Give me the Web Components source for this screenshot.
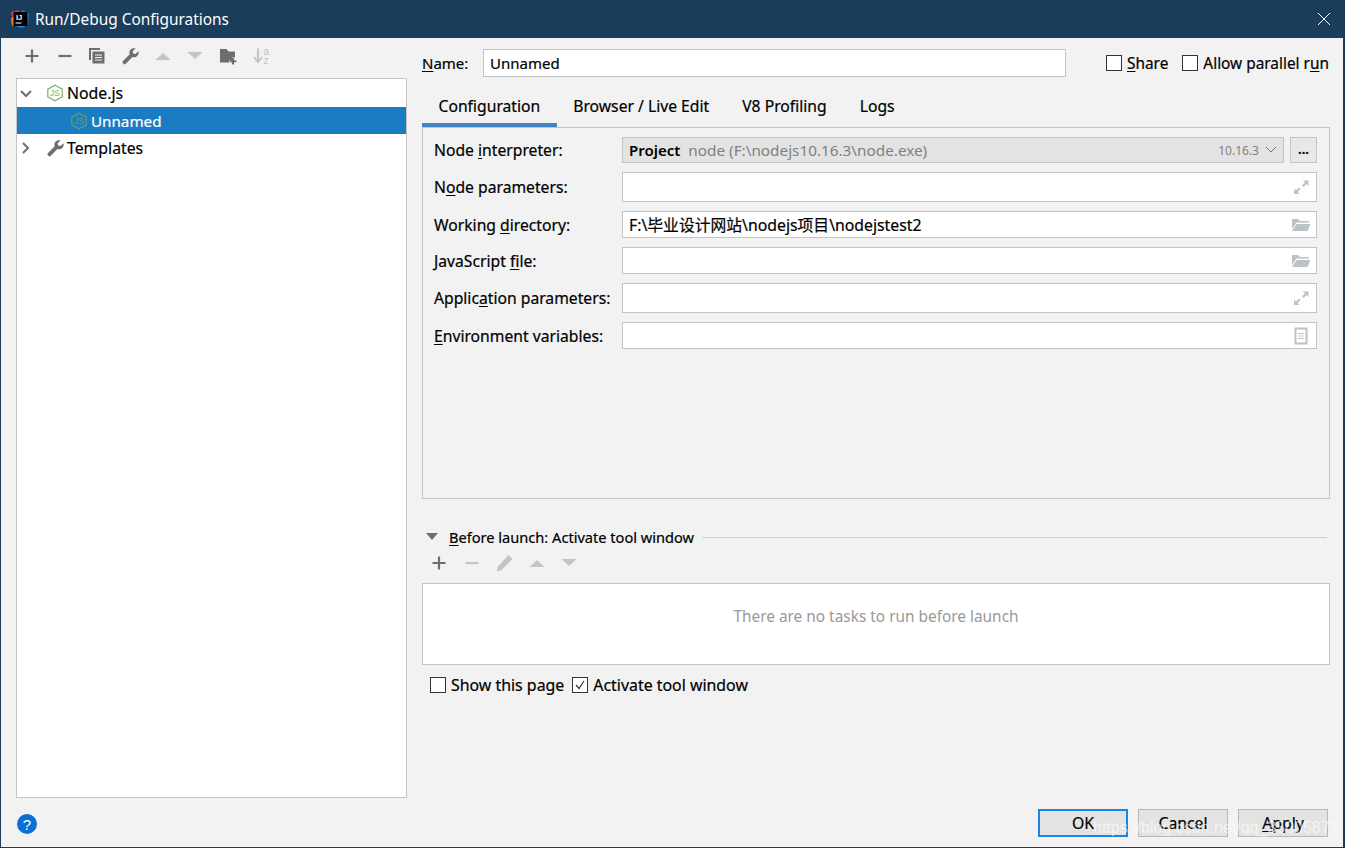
<!DOCTYPE html>
<html lang="en">
<head>
<meta charset="utf-8">
<title>Run/Debug Configurations</title>
<style>
  html, body { margin: 0; padding: 0; background: #f2f2f2; }
  body { font: 15px "Noto Sans", "Noto Sans CJK SC", sans-serif; color: #000; -webkit-text-stroke: 0.2px; }
  u { text-underline-offset: 2px; text-decoration-thickness: 1px; }
</style>
</head>
<body>
<rd-dialog>
  <rd-titlebar slot="title">Run/Debug Configurations</rd-titlebar>

  <div slot="left">
    <rd-toolbar pitch="32.7" first="8" top="10">
      <rd-icon name="plus"></rd-icon>
      <rd-icon name="minus"></rd-icon>
      <rd-icon name="copy"></rd-icon>
      <rd-icon name="wrench"></rd-icon>
      <rd-icon name="up"></rd-icon>
      <rd-icon name="down"></rd-icon>
      <rd-icon name="folderplus"></rd-icon>
      <rd-icon name="sort"></rd-icon>
    </rd-toolbar>
  </div>
  <rd-tree slot="left">
    <rd-tree-row arrow="open" icon="node" style="font-size:15.8px">Node.js</rd-tree-row>
    <rd-tree-row depth="1" icon="nodesel" selected style="font-size:15.2px">Unnamed</rd-tree-row>
    <rd-tree-row arrow="closed" icon="wrench" style="font-size:15.8px">Templates</rd-tree-row>
  </rd-tree>

  <rd-namebar slot="right">
    <span slot="label"><u>N</u>ame:</span>
    <span slot="value">Unnamed</span>
    <rd-check slot="opts" style="font-size:15.4px"><u>S</u>hare</rd-check>
    <rd-check slot="opts" style="font-size:15.4px">Allow parallel r<u>u</u>n</rd-check>
  </rd-namebar>

  <rd-tabs slot="right" style="font-size:15.7px">
    <span active>Configuration</span>
    <span>Browser / Live Edit</span>
    <span>V8 Profiling</span>
    <span>Logs</span>
  </rd-tabs>

  <rd-panel slot="right" style="font-size:15.7px">
    <rd-field combo h="26"><span slot="label">Node <u>i</u>nterpreter:</span><b slot="value">Project</b><span slot="hint">node (F:\nodejs10.16.3\node.exe)</span><span slot="ver">10.16.3</span></rd-field>
    <rd-field icon="expand" h="30"><span slot="label">N<u>o</u>de parameters:</span></rd-field>
    <rd-field icon="folder" h="27"><span slot="label">Working <u>d</u>irectory:</span><span slot="value" style="font-size:15.8px">F:\毕业设计网站\nodejs项目\nodejstest2</span></rd-field>
    <rd-field icon="folder" h="27"><span slot="label">JavaScript <u>f</u>ile:</span></rd-field>
    <rd-field icon="expand" h="30"><span slot="label">Applic<u>a</u>tion parameters:</span></rd-field>
    <rd-field icon="doc" h="27"><span slot="label"><u>E</u>nvironment variables:</span></rd-field>
  </rd-panel>

  <rd-before slot="right" style="font-size:14.6px"><u>B</u>efore launch: Activate tool window</rd-before>

  <rd-toolbar slot="right" pitch="32.5" first="9" top="8" h="36">
    <rd-icon name="plus"></rd-icon>
    <rd-icon name="minusoff"></rd-icon>
    <rd-icon name="pencil"></rd-icon>
    <rd-icon name="up"></rd-icon>
    <rd-icon name="down"></rd-icon>
  </rd-toolbar>

  <rd-tasks slot="right" style="font-size:15.4px">There are no tasks to run before launch</rd-tasks>

  <rd-checks slot="right" style="font-size:15.9px">
    <rd-check>Show this page</rd-check>
    <rd-check checked>Activate tool window</rd-check>
  </rd-checks>

  <rd-help slot="help"></rd-help>
  <rd-button slot="buttons" default>OK</rd-button>
  <rd-button slot="buttons">Cancel</rd-button>
  <rd-button slot="buttons"><u>A</u>pply</rd-button>
</rd-dialog>

<script>
const ICONS = {
  plus: '<path d="M8 1.500v13M1.500 8h13" stroke="#6e6e6e" stroke-width="2.200" fill="none"/>',
  minus: '<path d="M1.500 8h13" stroke="#6e6e6e" stroke-width="2.200" fill="none"/>',
  minusoff: '<path d="M1.500 8h13" stroke="#c4c4c4" stroke-width="2.200" fill="none"/>',
  copy: '<path d="M0 0h11v2H2v10H0z" fill="#6e6e6e"/><path d="M3.500 3.500h12v12h-12z" fill="#6e6e6e"/><path d="M6 6.500h7v1H6zM6 9h7v1H6zM6 11.500h7v1H6z" fill="#f2f2f2"/>',
  wrench: '<path d="M16.400 3.200l-2.900 2.900-2.300-.5-.5-2.300L13.600.4C11.900-.2 10 .2 8.700 1.500 7.400 2.800 7.100 4.700 7.700 6.300L.8 13.200c-.5.5-.5 1.300 0 1.800l.9.900c.5.500 1.300.500 1.800 0l6.900-6.900c1.600.6 3.500.3 4.800-1 1.300-1.300 1.800-3.100 1.200-4.800z" fill="#6e6e6e"/>',
  up: '<path d="M.5 12L8 5l7.500 7z" fill="#c4c4c4"/>',
  down: '<path d="M.5 4h15L8 11z" fill="#c4c4c4"/>',
  folderplus: '<path d="M0 1h6.500l2 2.500h6.500v6h-3v3H9v2H0z" fill="#6e6e6e"/><path d="M13 10v6.500M9.800 13.200h6.500" stroke="#6e6e6e" stroke-width="2" fill="none"/>',
  sort: '<path d="M5 .5v12.500M1 9l4 5 4-5" stroke="#c4c4c4" stroke-width="2" fill="none"/><text x="10.500" y="7" font-size="10" font-family="Liberation Sans" fill="#c4c4c4">a</text><text x="10.500" y="16" font-size="10" font-family="Liberation Sans" fill="#c4c4c4">z</text>',
  pencil: '<path d="M12.500 0l4 4L5.500 15l-4.500 1.500 1-5z" fill="#c4c4c4"/>',
  node: '<path d="M8 .2l7.200 4v7.600L8 15.800.8 11.800V4.200z" fill="none" stroke="#7fb36c" stroke-width="1.200"/><text x="8" y="11.200" text-anchor="middle" font-size="8.500" font-family="Liberation Sans" fill="#7fb36c" style="-webkit-text-stroke:0">JS</text>',
  nodesel: '<path d="M8 .2l7.200 4v7.600L8 15.800.8 11.800V4.200z" fill="none" stroke="#5f9f6a" stroke-width="1.200"/><text x="8" y="11.200" text-anchor="middle" font-size="8.500" font-family="Liberation Sans" fill="#5f9f6a" style="-webkit-text-stroke:0">JS</text>',
  expand: '<path d="M10 1.500h5.500V7l-1.900-1.900-3 3-1.700-1.700 3-3z" fill="#bcc3c7"/><path d="M1 9.500l1.900 1.900 3-3 1.700 1.700-3 3 1.900 1.900H1z" fill="#bcc3c7"/>',
  folder: '<path d="M-1 2h6l2 2h9v1.500H3.500L-1 12z" fill="#bcc3c7"/><path d="M3.500 7h14l-3 7H-1z" fill="#bcc3c7"/>',
  doc: '<path d="M2.500 .5h11v15h-11z" fill="#fff" stroke="#bcc3c7" stroke-width="2"/><path d="M5 5h6v1H5zM5 7.500h6v1H5zM5 10h6v1H5z" fill="#bcc3c7"/>'
};

function iconSvg(name, size = 16) {
  return `<svg width="${size}" height="${size}" viewBox="0 0 16 16" style="display:block;overflow:visible">${ICONS[name] || ''}</svg>`;
}

class Base extends HTMLElement {
  connectedCallback() {
    if (this.shadowRoot) return;
    this.attachShadow({ mode: 'open' });
    this.shadowRoot.innerHTML = this.render();
  }
}

class RdDialog extends Base {
  render() {
    return `<style>
      :host { display: flex; flex-direction: column; box-sizing: border-box; width: 1345px; height: 848px;
        position: relative; overflow: hidden; background: #f2f2f2;
        border: solid #1a3d5c; border-width: 0 2px 1px 1px; }
      .main { display: grid; grid-template-columns: 391px 908px; column-gap: 15px; padding-left: 15px; height: 760px; }
      .col { display: flex; flex-direction: column; min-height: 0; }
      .foot { display: flex; justify-content: space-between; align-items: flex-start; padding: 11px 15px 0 15px; flex: 1; font-size: 15.8px; }
      .btns { display: flex; gap: 10px; }
      .wm { position: absolute; left: 1092px; top: 819px; font: 16px "Liberation Sans", sans-serif;
        color: rgba(255,255,255,.62); white-space: nowrap; -webkit-text-stroke: 0; }
    </style>
    <slot name="title"></slot>
    <div class="main">
      <div class="col"><slot name="left"></slot></div>
      <div class="col"><slot name="right"></slot></div>
    </div>
    <div class="foot"><slot name="help"></slot><div class="btns"><slot name="buttons"></slot></div></div>
    <div class="wm">https://blog.csdn.net/qq_35005871</div>`;
  }
}

class RdTitlebar extends Base {
  render() {
    return `<style>
      :host { display: flex; align-items: center; height: 38px; margin: 0 -2px 0 -1px; padding-left: 10px; background: #1a3d5c;
        color: #fff; font-size: 15.4px; flex: none; -webkit-text-stroke: 0; }
      svg.logo { margin-right: 5px; flex: none; }
      .x { margin-left: auto; margin-right: 14px; }
    </style>
    <svg class="logo" width="20" height="20" viewBox="0 0 20 20">
      <path d="M1 3l8-2 2 6-8 6z" fill="#f0266e"/>
      <path d="M1 9l4-2 1 8-4 2z" fill="#f58220"/>
      <path d="M12 1l7 3-1 12-6 3-7-2z" fill="#1c7fe0"/>
      <rect x="3.500" y="3" width="14" height="14" fill="#000"/>
      <text x="6" y="10.500" font-size="7.500" font-family="Liberation Sans" font-weight="700" fill="#fff">IJ</text>
      <rect x="5.500" y="13.500" width="6" height="1" fill="#fff"/>
    </svg>
    <slot></slot>
    <svg class="x" width="14" height="14" viewBox="0 0 14 14"><path d="M1 1l12 12M13 1L1 13" stroke="#fff" stroke-width="1"/></svg>`;
  }
}

class RdIcon extends Base {
  render() {
    return `<style>:host { display: block; width: 16px; height: 16px; }</style>${iconSvg(this.getAttribute('name'))}`;
  }
}

class RdToolbar extends Base {
  render() {
    const gap = parseFloat(this.getAttribute('pitch')) - 16;
    const first = this.getAttribute('first');
    const top = this.getAttribute('top');
    const h = this.getAttribute('h') || 40;
    return `<style>
      :host { display: flex; align-items: flex-start; box-sizing: border-box; flex: none; height: ${h}px;
        padding: ${top || 0}px 0 0 ${first}px; gap: ${gap}px; }
      ::slotted(rd-icon) { flex: none; }
    </style><slot></slot>`;
  }
}

class RdTree extends Base {
  render() {
    return `<style>
      :host { display: block; box-sizing: border-box; flex: 1; min-height: 0; background: #fff;
        border: 1px solid #c4c4c4; }
    </style><slot></slot>`;
  }
}

class RdTreeRow extends Base {
  render() {
    const depth = +(this.getAttribute('depth') || 0);
    const arrow = this.getAttribute('arrow');
    const sel = this.hasAttribute('selected');
    const arrows = {
      open: '<path d="M2 5l5 5 5-5" fill="none" stroke="#6e6e6e" stroke-width="2"/>',
      closed: '<path d="M4 2l5 5-5 5" fill="none" stroke="#6e6e6e" stroke-width="2"/>'
    };
    return `<style>
      :host { display: flex; align-items: center; height: ${sel ? 27 : 28}px; padding-left: ${depth ? 54 : 1}px;
        ${sel ? 'background:#1a7dc4;color:#fff;' : ''} }
      .arrow { width: 14px; margin-left: 1px; margin-right: 14px; flex: none; }
      .ic { margin-right: 4px; flex: none; }
    </style>
    ${depth ? '' : `<svg class="arrow" width="14" height="14" viewBox="0 0 14 14">${arrows[arrow] || ''}</svg>`}
    <span class="ic">${iconSvg(this.getAttribute('icon'), 16)}</span><slot></slot>`;
  }
}

class RdCheck extends Base {
  render() {
    const mark = this.hasAttribute('checked')
      ? '<svg width="14" height="14" viewBox="0 0 14 14" style="display:block"><path d="M3 7l3 3.500 5-7.500" fill="none" stroke="#333" stroke-width="1.200"/></svg>' : '';
    return `<style>
      :host { display: inline-flex; align-items: center; gap: 5px; white-space: nowrap; }
      .box { box-sizing: border-box; width: 16px; height: 16px; border: 1px solid #333; background: #fff; flex: none; }
    </style><span class="box">${mark}</span><span><slot></slot></span>`;
  }
}

class RdNamebar extends Base {
  render() {
    return `<style>
      :host { display: flex; align-items: center; height: 28px; margin-top: 11px; flex: none; }
      .label { width: 61px; flex: none; }
      .input { box-sizing: border-box; width: 583px; height: 28px; background: #fff; border: 1px solid #c4c4c4;
        display: flex; align-items: center; padding-left: 6px; flex: none; }
      .opts { display: flex; gap: 14px; margin-left: 40px; }
    </style>
    <span class="label"><slot name="label"></slot></span>
    <span class="input"><slot name="value"></slot></span>
    <span class="opts"><slot name="opts"></slot></span>`;
  }
}

class RdTabs extends Base {
  render() {
    return `<style>
      :host { display: flex; height: 37px; margin-top: 13px; flex: none; box-sizing: border-box; }
      ::slotted(span) { display: flex; align-items: center; padding: 0 16.5px 6px; box-sizing: border-box; height: 37px; }
      ::slotted(span[active]) { border-bottom: 4px solid #4083c9; padding-bottom: 2px; }
    </style><slot></slot>`;
  }
}

class RdPanel extends Base {
  render() {
    return `<style>
      :host { display: grid; grid-auto-rows: min-content; row-gap: 9px; box-sizing: border-box; flex: none;
        height: 372px; padding: 9px 12px 0 11px; border: 1px solid #c4c4c4; }
    </style><slot></slot>`;
  }
}

class RdField extends Base {
  render() {
    const h = this.getAttribute('h');
    const combo = this.hasAttribute('combo');
    const icon = this.getAttribute('icon');
    return `<style>
      :host { display: flex; align-items: center; height: ${h}px; }
      .label { width: 188px; flex: none; }
      .box { box-sizing: border-box; flex: 1; height: 100%; display: flex; align-items: center; padding: 0 6px;
        border: 1px solid #c4c4c4; background: ${combo ? '#e3e3e3' : '#fff'}; min-width: 0; }
      .ic { margin-left: auto; margin-right: 1px; }
      .hint { color: #808080; margin-left: 8px; font-size: 15.3px; -webkit-text-stroke: 0; }
      .ver { margin-left: auto; color: #808080; font-size: 12px; margin-right: 6px; -webkit-text-stroke: 0; }
      .more { box-sizing: border-box; width: 27px; height: 100%; margin-left: 6px; flex: none; border: 1px solid #c4c4c4;
        background: #e8e8e8; display: flex; justify-content: center; align-items: flex-end; padding-bottom: 6px; font-size: 13px; line-height: 1; font-weight: 700; }
      ::slotted(b) { font-weight: 600; font-size: 15px; -webkit-text-stroke: 0; }
    </style>
    <span class="label"><slot name="label"></slot></span>
    <div class="box">
      <slot name="value"></slot>
      ${combo ? `<span class="hint"><slot name="hint"></slot></span><span class="ver"><slot name="ver"></slot></span>
        <svg width="12" height="8" viewBox="0 0 12 8"><path d="M1 1l5 5 5-5" fill="none" stroke="#707070"/></svg>` : ''}
      ${icon ? `<span class="ic">${iconSvg(icon, 16)}</span>` : ''}
    </div>
    ${combo ? '<div class="more">...</div>' : ''}`;
  }
}

class RdBefore extends Base {
  render() {
    return `<style>
      :host { display: flex; align-items: center; height: 20px; margin-top: 28px; flex: none; white-space: nowrap; }
      svg { margin-left: 4px; margin-right: 11px; flex: none; }
      .line { flex: 1; height: 1px; background: #d0d0d0; margin: 0 3px 0 8px; }
    </style>
    <svg width="12" height="8" viewBox="0 0 12 8"><path d="M0 0h12L6 7z" fill="#6e6e6e"/></svg>
    <span><slot></slot></span><span class="line"></span>`;
  }
}

class RdTasks extends Base {
  render() {
    return `<style>
      :host { display: flex; align-items: center; justify-content: center; box-sizing: border-box; height: 82px; flex: none;
        padding-bottom: 16px; background: #fff; border: 1px solid #c4c4c4; color: #999; -webkit-text-stroke: 0; }
    </style><slot></slot>`;
  }
}

class RdChecks extends Base {
  render() {
    return `<style>
      :host { display: flex; align-items: center; gap: 8px; height: 20px; margin-top: 10px; padding-left: 8px; flex: none; }
    </style><slot></slot>`;
  }
}

class RdHelp extends Base {
  render() {
    return `<style>
      :host { display: flex; align-items: center; justify-content: center; width: 20px; height: 20px; margin: 5px 0 0 1px; border-radius: 50%;
        background: #0b6fd6; color: #fff; font: 15px "Liberation Sans", sans-serif; -webkit-text-stroke: 0; }
    </style>?`;
  }
}

class RdButton extends Base {
  render() {
    const def = this.hasAttribute('default');
    return `<style>
      :host { display: flex; align-items: center; justify-content: center; box-sizing: border-box; width: 90px; height: 28px;
        background: #e3e3e3; border: ${def ? '2px solid #1a86e0' : '1px solid #b8b8b8'}; }
    </style><slot></slot>`;
  }
}

customElements.define('rd-dialog', RdDialog);
customElements.define('rd-titlebar', RdTitlebar);
customElements.define('rd-icon', RdIcon);
customElements.define('rd-toolbar', RdToolbar);
customElements.define('rd-tree', RdTree);
customElements.define('rd-tree-row', RdTreeRow);
customElements.define('rd-check', RdCheck);
customElements.define('rd-namebar', RdNamebar);
customElements.define('rd-tabs', RdTabs);
customElements.define('rd-panel', RdPanel);
customElements.define('rd-field', RdField);
customElements.define('rd-before', RdBefore);
customElements.define('rd-tasks', RdTasks);
customElements.define('rd-checks', RdChecks);
customElements.define('rd-help', RdHelp);
customElements.define('rd-button', RdButton);
</script>
</body>
</html>
